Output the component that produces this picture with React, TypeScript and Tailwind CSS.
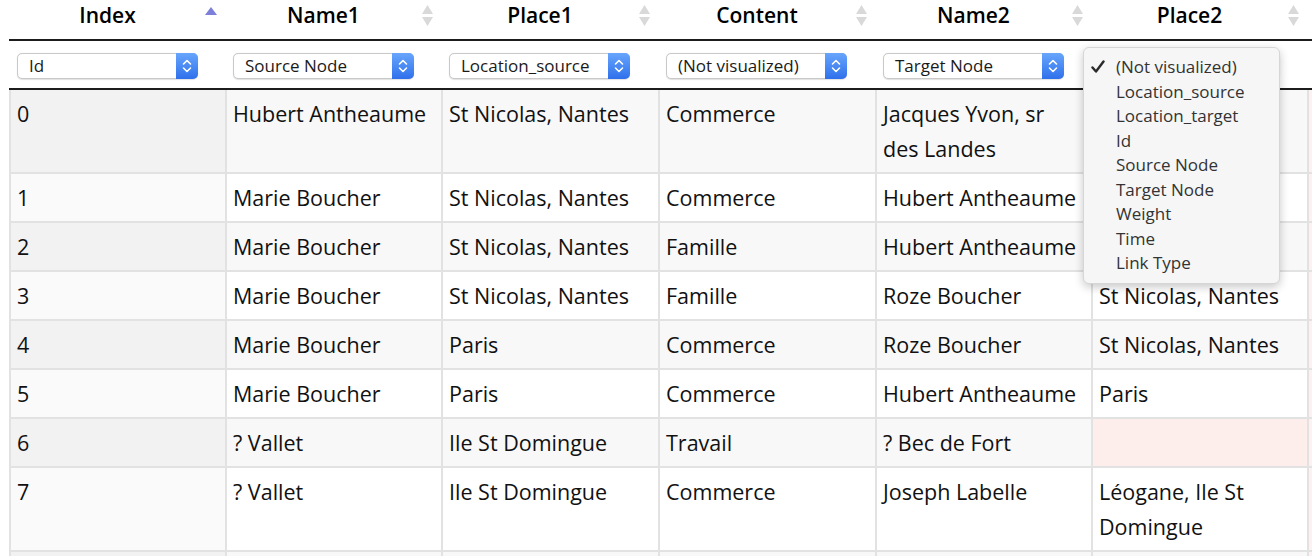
import React from "react";

const FONT = { fontFamily: '"Open Sans", "Noto Sans", Arial, sans-serif' };

type Row = { cells: string[]; pinkPlace2?: boolean };

const rows: Row[] = [
  { cells: ["0", "Hubert Antheaume", "St Nicolas, Nantes", "Commerce", "Jacques Yvon, sr des Landes", "Paris"] },
  { cells: ["1", "Marie Boucher", "St Nicolas, Nantes", "Commerce", "Hubert Antheaume", "St Nicolas, Nantes"] },
  { cells: ["2", "Marie Boucher", "St Nicolas, Nantes", "Famille", "Hubert Antheaume", "St Nicolas, Nantes"] },
  { cells: ["3", "Marie Boucher", "St Nicolas, Nantes", "Famille", "Roze Boucher", "St Nicolas, Nantes"] },
  { cells: ["4", "Marie Boucher", "Paris", "Commerce", "Roze Boucher", "St Nicolas, Nantes"] },
  { cells: ["5", "Marie Boucher", "Paris", "Commerce", "Hubert Antheaume", "Paris"] },
  { cells: ["6", "? Vallet", "Ile St Domingue", "Travail", "? Bec de Fort", ""], pinkPlace2: true },
  { cells: ["7", "? Vallet", "Ile St Domingue", "Commerce", "Joseph Labelle", "Léogane, Ile St Domingue"] },
  { cells: ["", "", "", "", "", ""] },
];

const headers = ["Index", "Name1", "Place1", "Content", "Name2", "Place2"];
const selects = ["Id", "Source Node", "Location_source", "(Not visualized)", "Target Node", "(Not visualized)"];
const menuItems = [
  "(Not visualized)",
  "Location_source",
  "Location_target",
  "Id",
  "Source Node",
  "Target Node",
  "Weight",
  "Time",
  "Link Type",
];

const GRID = "grid grid-cols-[216px_216px_217px_217px_216px_216px_1fr]";

function SortIcon({ active }: { active?: boolean }) {
  if (active) {
    return (
      <svg width="12" height="8" viewBox="0 0 12 8" className="absolute right-[8px] top-[7px]">
        <path d="M6 0 L12 8 L0 8 Z" fill="#7c80d8" />
      </svg>
    );
  }
  return (
    <svg width="11" height="22" viewBox="0 0 11 22" className="absolute right-[8px] top-[5px]">
      <path d="M5.5 0 L11 9 L0 9 Z" fill="#d9d9d9" />
      <path d="M0 12 L11 12 L5.5 21 Z" fill="#d9d9d9" />
    </svg>
  );
}

function Select({ label }: { label: string }) {
  return (
    <div className="flex h-[26px] w-[181px] items-center rounded-[5px] border border-[#c9c9c9] bg-white shadow-[0_0.5px_1px_rgba(0,0,0,0.12)]">
      <span className="flex-1 truncate pl-[11px] text-[17px] leading-[24px] text-[#1a1a1a]">{label}</span>
      <div className="-my-px -mr-px flex h-[26px] w-[22px] items-center justify-center rounded-r-[5px] bg-gradient-to-b from-[#68a5fb] to-[#2f70ec]">
        <svg width="10" height="16" viewBox="0 0 10 16">
          <path d="M1.5 6 L5 2.5 L8.5 6" fill="none" stroke="white" strokeWidth="1.6" strokeLinecap="round" strokeLinejoin="round" />
          <path d="M1.5 10 L5 13.5 L8.5 10" fill="none" stroke="white" strokeWidth="1.6" strokeLinecap="round" strokeLinejoin="round" />
        </svg>
      </div>
    </div>
  );
}

export default function App() {
  return (
    <div className="relative h-[556px] w-[1312px] overflow-hidden bg-white text-[#111]" style={FONT}>
      <div className="pl-[9px]">
        {/* Header */}
        <div className={`${GRID} h-[41px] border-b-2 border-[#1c1c1c]`}>
          {headers.map((h, i) => (
            <div key={h} className="relative flex justify-center pr-[19px]">
              <span className="text-[21px] font-semibold leading-[30px] text-black">{h}</span>
              <SortIcon active={i === 0} />
            </div>
          ))}
          <div />
        </div>
        {/* Filter row */}
        <div className={`${GRID} h-[49px] items-start pt-[12px] border-b-2 border-[#1c1c1c]`}>
          {selects.map((s, i) => (
            <div key={i} className="pl-[8px]">
              <Select label={s} />
            </div>
          ))}
          <div />
        </div>
        {/* Body */}
        {rows.map((r, ri) => {
          const even = ri % 2 === 0;
          return (
            <div key={ri} className={`${GRID} border-b-2 border-[#e2e2e2]`}>
              {r.cells.map((c, ci) => {
                let bg = even ? "bg-[#f8f8f8]" : "bg-white";
                if (ci === 0) bg = even ? "bg-[#f2f2f2]" : "bg-[#fafafa]";
                if (ci === 5 && r.pinkPlace2) bg = "bg-[#fdeeec]";
                return (
                  <div
                    key={ci}
                    className={`${bg} min-h-[47px] border-l-2 border-[#e2e2e2] py-[6px] pl-[6px] pr-[6px] text-[21.5px] leading-[35px] text-[#111]`}
                  >
                    {c}
                  </div>
                );
              })}
              <div className="border-l-2 border-[#e2e2e2] bg-[#fdf1f1]" />
            </div>
          );
        })}
      </div>

      {/* Dropdown menu */}
      <div className="absolute left-[1083px] top-[47px] w-[197px] rounded-[6px] border border-[#d6d6d6] bg-[#f6f6f6] py-[7px] shadow-[0_3px_10px_rgba(0,0,0,0.22)]">
        {menuItems.map((m, i) => (
          <div key={m} className="relative h-[24.5px] pl-[32px] text-[17px] leading-[24.5px] text-[#333]">
            {i === 0 && (
              <svg width="14" height="14" viewBox="0 0 14 14" className="absolute left-[7px] top-[5px]">
                <path d="M1.5 7.5 L5 11.5 L12.5 1.5" fill="none" stroke="#2a2a2a" strokeWidth="2.4" strokeLinecap="round" strokeLinejoin="round" />
              </svg>
            )}
            {m}
          </div>
        ))}
      </div>
    </div>
  );
}
